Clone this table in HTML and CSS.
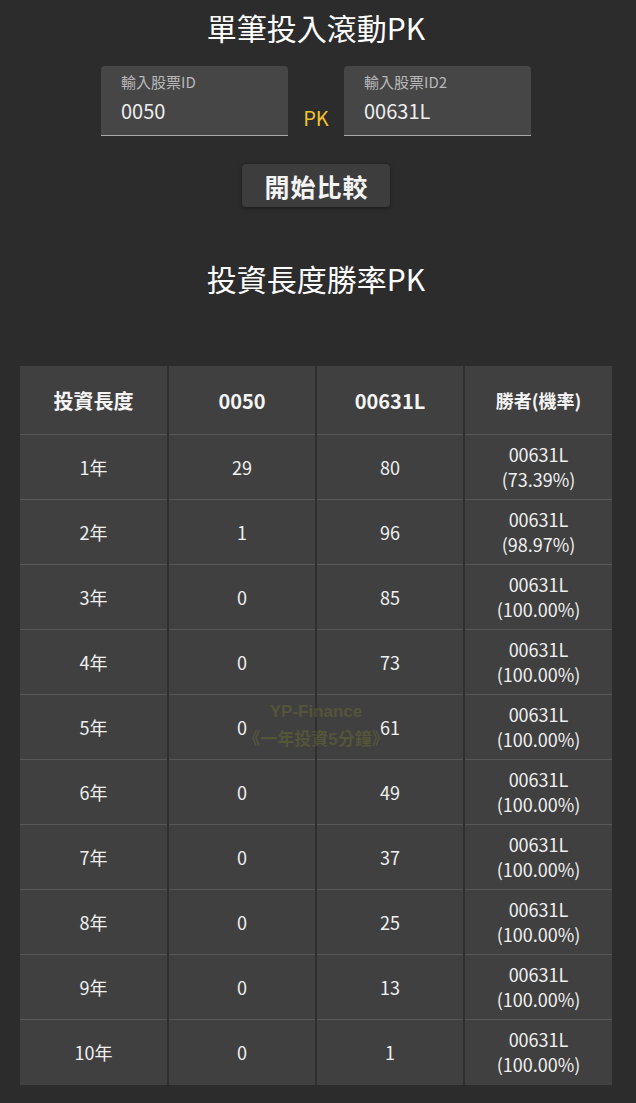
FILE: index.html
```html
<!DOCTYPE html>
<html lang="zh-Hant">
<head>
<meta charset="utf-8">
<title>單筆投入滾動PK</title>
<link rel="stylesheet" href="styles.css">
</head>
<body>
<main class="page">
  <h1 class="title">單筆投入滾動PK</h1>
  <div class="inputs">
    <div class="field">
      <span class="field-label">輸入股票ID</span>
      <span class="field-value">0050</span>
    </div>
    <span class="pk">PK</span>
    <div class="field">
      <span class="field-label">輸入股票ID2</span>
      <span class="field-value">00631L</span>
    </div>
  </div>
  <div class="btn-row"><button class="btn">開始比較</button></div>
  <h2 class="title2">投資長度勝率PK</h2>
  <div class="table-wrap">
    <table class="tbl">
      <thead>
        <tr><th>投資長度</th><th>0050</th><th>00631L</th><th class="th-small">勝者(機率)</th></tr>
      </thead>
      <tbody>
        <tr><td>1年</td><td>29</td><td>80</td><td>00631L<br>(73.39%)</td></tr>
        <tr><td>2年</td><td>1</td><td>96</td><td>00631L<br>(98.97%)</td></tr>
        <tr><td>3年</td><td>0</td><td>85</td><td>00631L<br>(100.00%)</td></tr>
        <tr><td>4年</td><td>0</td><td>73</td><td>00631L<br>(100.00%)</td></tr>
        <tr><td>5年</td><td>0</td><td>61</td><td>00631L<br>(100.00%)</td></tr>
        <tr><td>6年</td><td>0</td><td>49</td><td>00631L<br>(100.00%)</td></tr>
        <tr><td>7年</td><td>0</td><td>37</td><td>00631L<br>(100.00%)</td></tr>
        <tr><td>8年</td><td>0</td><td>25</td><td>00631L<br>(100.00%)</td></tr>
        <tr><td>9年</td><td>0</td><td>13</td><td>00631L<br>(100.00%)</td></tr>
        <tr><td>10年</td><td>0</td><td>1</td><td>00631L<br>(100.00%)</td></tr>
      </tbody>
    </table>
    <div class="watermark">YP-Finance<br>《一年投資5分鐘》</div>
  </div>
</main>
</body>
</html>
```

FILE: styles.css
```css
html, body {
  margin: 0;
  padding: 0;
  background: #2c2c2c;
}
body {
  font-family: "Noto Sans CJK TC", "Noto Sans", sans-serif;
  color: #f2f2f2;
}
.page {
  width: 632px;
  padding-top: 6px;
}
.title {
  margin: 0;
  text-align: center;
  font-size: 30px;
  font-weight: 400;
  line-height: 42px;
  color: #ffffff;
}
.inputs {
  display: flex;
  justify-content: center;
  align-items: flex-end;
  margin-top: 18px;
}
.field {
  width: 187px;
  height: 70px;
  background: #464646;
  border-radius: 4px 4px 0 0;
  border-bottom: 1px solid #a8a8a8;
  display: flex;
  flex-direction: column;
  padding-left: 20px;
  box-sizing: border-box;
}
.field-label {
  font-size: 15px;
  line-height: 18px;
  color: #b8b8b8;
  margin-top: 7px;
}
.field-value {
  font-size: 20px;
  line-height: 26px;
  color: #eeeeee;
  margin-top: 7px;
}
.pk {
  width: 56px;
  text-align: center;
  color: #f2c12e;
  font-size: 20px;
  line-height: 26px;
  margin-bottom: 5px;
}
.btn-row {
  display: flex;
  justify-content: center;
  margin-top: 28px;
}
.btn {
  width: 148px;
  height: 43px;
  background: #3d3d3d;
  border: none;
  border-radius: 4px;
  box-shadow: 0 1px 4px rgba(0, 0, 0, 0.45);
  color: #f4f4f4;
  font-family: inherit;
  font-size: 25px;
  font-weight: 700;
  letter-spacing: 1px;
  padding: 0 0 0 1px;
}
.title2 {
  margin: 50px 0 0;
  text-align: center;
  font-size: 30px;
  font-weight: 400;
  line-height: 42px;
  color: #ffffff;
}
.table-wrap {
  position: relative;
  margin: 67px 20px 0 20px;
  width: 592px;
}
.tbl {
  width: 592px;
  border-collapse: collapse;
  table-layout: fixed;
  background: #404040;
}
.tbl th, .tbl td {
  text-align: center;
  vertical-align: middle;
  border-left: 2px solid #2f2f2f;
  border-bottom: 1px solid #575757;
  padding: 0;
}
.tbl th:first-child, .tbl td:first-child {
  border-left: none;
}
.tbl tr:last-child td {
  border-bottom: 1px solid #404040;
}
.tbl th {
  height: 68px;
  font-size: 20px;
  font-weight: 700;
  color: #f4f4f4;
}
.tbl th.th-small {
  font-size: 18px;
}
.tbl td {
  height: 64px;
  font-size: 18px;
  line-height: 25px;
  color: #f0f0f0;
}
.watermark {
  position: absolute;
  left: 0;
  right: 0;
  top: 332px;
  text-align: center;
  font-family: "Liberation Sans", "Noto Sans CJK TC", sans-serif;
  font-weight: 700;
  font-size: 17px;
  line-height: 28px;
  color: rgba(140, 140, 40, 0.28);
  pointer-events: none;
}
```
